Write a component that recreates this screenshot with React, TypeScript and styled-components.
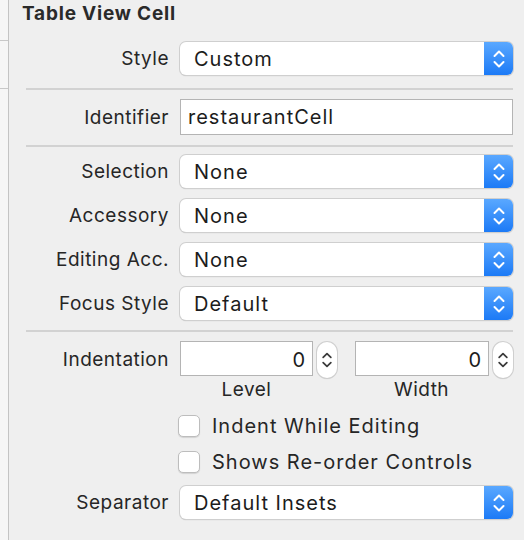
import styled, { createGlobalStyle } from 'styled-components';

const GlobalStyle = createGlobalStyle`
  html, body {
    margin: 0;
    padding: 0;
    background: #efefef;
  }
  body {
    font-family: Inter, "Noto Sans", "Liberation Sans", sans-serif;
    color: #262626;
  }
`

const popupRows = [
  { label: 'Selection', value: 'None' },
  { label: 'Accessory', value: 'None' },
  { label: 'Editing Acc.', value: 'None' },
  { label: 'Focus Style', value: 'Default' },
];

const ChevronPair = ({ color }: { color: string }) => (
  <svg width="14" height="22" viewBox="0 0 14 22" fill="none">
    <path d="M2.5 8 L7 3.5 L11.5 8" stroke={color} strokeWidth="2" strokeLinecap="round" strokeLinejoin="round" />
    <path d="M2.5 14 L7 18.5 L11.5 14" stroke={color} strokeWidth="2" strokeLinecap="round" strokeLinejoin="round" />
  </svg>
);

const Popup = ({ value }: { value: string }) => (
  <PopupBox>
    <span className='value'>{value}</span>
    <span className='arrows'>
      <ChevronPair color='#fff' />
    </span>
  </PopupBox>
);

const NumberField = ({ value, label }: { value: string; label: string }) => (
  <NumberGroup>
    <div className='inputs'>
      <NumberInput>{value}</NumberInput>
      <Stepper>
        <ChevronPair color='#3a3a3a' />
      </Stepper>
    </div>
    <SubLabel>{label}</SubLabel>
  </NumberGroup>
);

const App = () => {
  return (
    <>
      <GlobalStyle />
      <Page>
        <SideStrip>
          <div className='cell' style={{ height: 40 }} />
          <div className='cell' style={{ height: 47 }} />
        </SideStrip>
        <Panel>
          <Title>Table View Cell</Title>

          <Row $top={14}>
            <Label>Style</Label>
            <Popup value='Custom' />
          </Row>

          <Divider $top={13} />

          <Row $top={9}>
            <Label>Identifier</Label>
            <TextField>restaurantCell</TextField>
          </Row>

          <Divider $top={10} />

          {popupRows.map((row, i) => (
            <Row key={row.label} $top={i === 0 ? 8 : 11}>
              <Label>{row.label}</Label>
              <Popup value={row.value} />
            </Row>
          ))}

          <Divider $top={10} />

          <Row $top={9} $align='flex-start'>
            <Label $height={38}>Indentation</Label>
            <NumberPair>
              <NumberField value='0' label='Level' />
              <NumberField value='0' label='Width' />
            </NumberPair>
          </Row>

          <CheckRow $top={6}>
            <CheckBox />
            <span>Indent While Editing</span>
          </CheckRow>
          <CheckRow $top={0}>
            <CheckBox />
            <span>Shows Re-order Controls</span>
          </CheckRow>

          <Row $top={6}>
            <Label>Separator</Label>
            <Popup value='Default Insets' />
          </Row>
        </Panel>
      </Page>
    </>
  )
}

const Page = styled.div`
  display: flex;
  width: 524px;
  height: 540px;
  overflow: hidden;
`

const SideStrip = styled.div`
  width: 8px;
  flex-shrink: 0;
  background: #f6f6f6;
  border-right: 1.5px solid #c4c4c4;
  .cell{
    border-bottom: 1px solid #c8c8c8;
  }
`

const Panel = styled.div`
  flex: 1;
  display: flex;
  flex-direction: column;
  padding-right: 11px;
`

const Title = styled.h2`
  margin: 0;
  padding-left: 13px;
  height: 28px;
  line-height: 27px;
  font-size: 19px;
  font-weight: 700;
  color: #2a2a2a;
  letter-spacing: 0.8px;
`

const Row = styled.div<{ $top: number; $align?: string }>`
  display: grid;
  grid-template-columns: 160px 1fr;
  column-gap: 11px;
  align-items: ${p => p.$align || 'center'};
  margin-top: ${p => p.$top}px;
`

const Label = styled.div<{ $height?: number }>`
  text-align: right;
  font-size: 19px;
  letter-spacing: 0.5px;
  color: #262626;
  ${p => p.$height ? `height: ${p.$height}px; line-height: ${p.$height}px;` : ''}
`

const Divider = styled.div<{ $top: number }>`
  margin-top: ${p => p.$top}px;
  margin-left: 17px;
  height: 2px;
  background: #d2d2d2;
`

const PopupBox = styled.div`
  display: flex;
  height: 33px;
  border-radius: 6px;
  background: #fff;
  box-shadow: 0 0 0 1px #cfcfcf, 0 1px 1px rgba(0,0,0,0.25);
  overflow: hidden;
  .value{
    flex: 1;
    padding-left: 14px;
    line-height: 34px;
    font-size: 20px;
    letter-spacing: 1px;
    color: #1c1c1c;
  }
  .arrows{
    width: 29px;
    display: flex;
    align-items: center;
    justify-content: center;
    background: linear-gradient(#5aa8ff, #1c7af6);
  }
`

const TextField = styled.div`
  height: 36px;
  box-sizing: border-box;
  border: 1px solid #b4b4b4;
  background: #fff;
  padding-left: 7px;
  line-height: 35px;
  font-size: 20px;
  letter-spacing: 1px;
  color: #1c1c1c;
`

const NumberPair = styled.div`
  display: grid;
  grid-template-columns: 157px 158px;
  column-gap: 18px;
`

const NumberGroup = styled.div`
  display: flex;
  flex-direction: column;
  .inputs{
    display: flex;
    align-items: flex-start;
    gap: 4px;
  }
`

const NumberInput = styled.div`
  flex: 1;
  height: 35px;
  box-sizing: border-box;
  border: 1px solid #b4b4b4;
  background: #fff;
  text-align: right;
  padding-right: 7px;
  line-height: 36px;
  font-size: 20px;
  color: #1c1c1c;
`

const Stepper = styled.div`
  width: 20px;
  height: 36px;
  box-sizing: border-box;
  border-radius: 10px;
  background: #fff;
  box-shadow: 0 0 0 1px #cfcfcf, 0 1px 1px rgba(0,0,0,0.2);
  display: flex;
  align-items: center;
  justify-content: center;
  margin-top: 1px;
  svg{
    width: 12px;
  }
`

const SubLabel = styled.div`
  width: 133px;
  text-align: center;
  font-size: 19px;
  letter-spacing: 0.5px;
  line-height: 24px;
  color: #262626;
`

const CheckRow = styled.div<{ $top: number }>`
  margin-top: ${p => p.$top}px;
  margin-left: 169px;
  height: 36px;
  display: flex;
  align-items: center;
  gap: 12px;
  font-size: 20px;
  letter-spacing: 1px;
  color: #262626;
`

const CheckBox = styled.div`
  width: 22px;
  height: 22px;
  box-sizing: border-box;
  border-radius: 5px;
  background: #fff;
  border: 1px solid #bdbdbd;
  box-shadow: 0 1px 1px rgba(0,0,0,0.12);
`

export default App;
